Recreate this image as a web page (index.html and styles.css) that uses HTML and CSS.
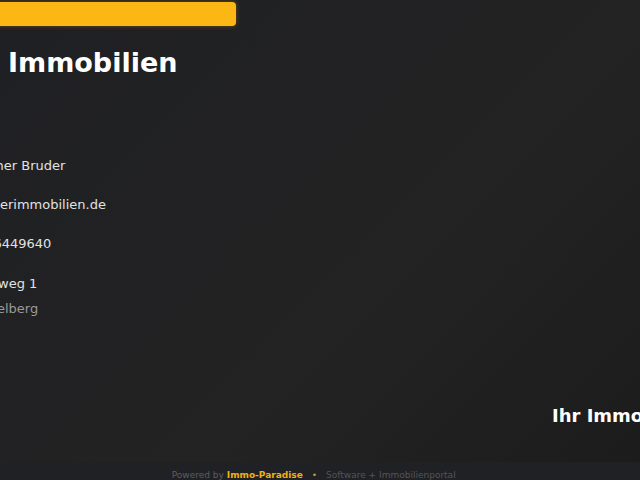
FILE: index.html
```html
<!DOCTYPE html>
<html lang="de">
<head>
<meta charset="utf-8">
<title>Bruder Immobilien</title>
<link rel="stylesheet" href="styles.css">
</head>
<body>
<div class="page">
  <div class="main">
    <div class="left">
      <div class="bar"></div>
      <h1 class="title">Immobilien</h1>
      <ul class="contact">
        <li class="line cut-a">her Bruder</li>
        <li class="line">erimmobilien.de</li>
        <li class="line cut-b">6449640</li>
        <li class="address">
          <span class="line cut-c">weg 1</span>
          <span class="line city">elberg</span>
        </li>
      </ul>
    </div>
    <div class="right">
      <h2 class="claim">Ihr Immobilienpartner</h2>
    </div>
  </div>
  <footer class="footer">
    <span class="muted">Powered by</span>
    <span class="brand">Immo-Paradise</span>
    <span class="dot">•</span>
    <span class="soft">Software + Immobilienportal</span>
  </footer>
</div>
</body>
</html>
```

FILE: styles.css
```css
html, body {
  margin: 0;
  padding: 0;
  background: #1e1e1e;
}

body {
  font-family: "DejaVu Sans", "Noto Sans", sans-serif;
  overflow: hidden;
}

.page {
  width: 640px;
  height: 480px;
  display: flex;
  flex-direction: column;
  overflow: hidden;
}

.main {
  height: 462px;
  display: flex;
  justify-content: space-between;
  background: linear-gradient(135deg, #1f2024 0%, #222223 45%, #232323 60%, #1c1c1c 100%);
}

.left {
  display: flex;
  flex-direction: column;
  width: 300px;
}

.bar {
  margin-top: 2px;
  margin-left: -10px;
  width: 246px;
  height: 24px;
  border-radius: 4px;
  background: #fdb714;
  box-shadow: 0 0 4px rgba(255, 160, 0, 0.35);
}

.title {
  margin: 21px 0 0 8px;
  font-size: 27px;
  line-height: 32px;
  font-weight: bold;
  color: #ffffff;
}

.contact {
  list-style: none;
  margin: 78.5px 0 0 0;
  padding: 0;
  display: flex;
  flex-direction: column;
  gap: 23.4px;
}

.line {
  display: block;
  font-size: 13px;
  line-height: 16px;
  color: #e2e2e2;
  white-space: nowrap;
}

.cut-a { margin-left: -4.5px; }
.cut-b { margin-left: -6.6px; }
.cut-c { margin-left: -2px; }

.address {
  display: flex;
  flex-direction: column;
  gap: 9.7px;
}

.city {
  margin-left: -3px;
  color: #9a9a9a;
}

.right {
  width: 88px;
  display: flex;
  align-items: flex-end;
  padding-bottom: 35px;
}

.claim {
  margin: 0;
  font-size: 18px;
  line-height: 22px;
  font-weight: bold;
  color: #ffffff;
  white-space: nowrap;
}

.footer {
  height: 18px;
  box-sizing: border-box;
  padding: 8px 12.6px 0 0;
  display: flex;
  justify-content: center;
  align-items: flex-start;
  background: #202125;
  font-size: 9px;
  line-height: 10.5px;
  white-space: nowrap;
}

.muted {
  color: #5e5e60;
  margin-right: 2.9px;
}

.brand {
  color: #f2b20c;
  font-weight: bold;
}

.dot {
  color: #c99a1a;
  margin: 0 9px;
}

.soft {
  color: #545457;
}
```
